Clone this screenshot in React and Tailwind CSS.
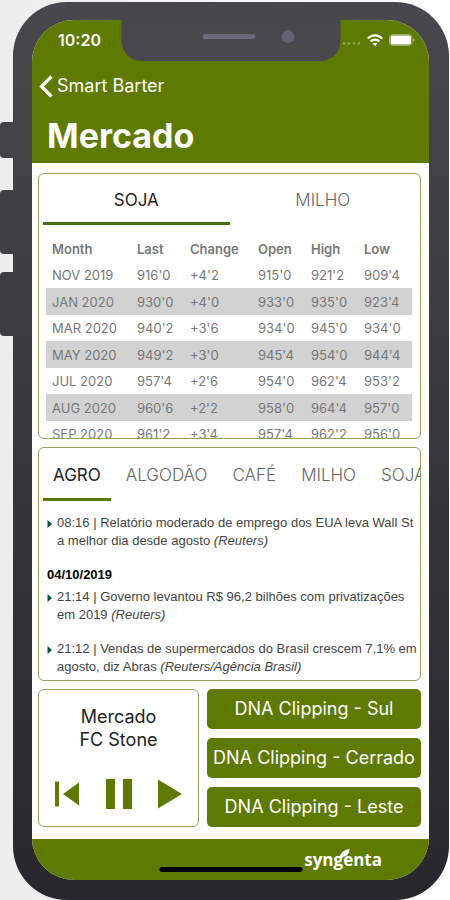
import React, { useState } from 'react';

const QUOTES = [
  ['NOV 2019', "916'0", "+4'2", "915'0", "921'2", "909'4"],
  ['JAN 2020', "930'0", "+4'0", "933'0", "935'0", "923'4"],
  ['MAR 2020', "940'2", "+3'6", "934'0", "945'0", "934'0"],
  ['MAY 2020', "949'2", "+3'0", "945'4", "954'0", "944'4"],
  ['JUL 2020', "957'4", "+2'6", "954'0", "962'4", "953'2"],
  ['AUG 2020', "960'6", "+2'2", "958'0", "964'4", "957'0"],
  ['SEP 2020', "961'2", "+3'4", "957'4", "962'2", "956'0"],
];

const NEWS_TABS = ['AGRO', 'ALGODÃO', 'CAFÉ', 'MILHO', 'SOJA'];

export default function App() {
  return (
    <div className="relative min-h-screen bg-linear-to-r from-[#ededed] to-white pl-[13px] pt-[2px] pr-px font-['Inter','Liberation_Sans',sans-serif]">
      <SideButtons />
      <div className="rounded-[54px] bg-linear-to-b from-[#48474c] to-[#28272c] pt-[18px] pr-5 pb-5 pl-[19px]">
        <div className="relative flex flex-col overflow-hidden rounded-[42px] bg-white">
          <Notch />
          <Header />
          <main className="flex flex-col gap-2 pt-2.5 pr-2 pb-3 pl-1.5">
            <QuotesCard />
            <NewsCard />
            <div className="flex gap-2">
              <Player />
              <Clippings />
            </div>
          </main>
          <Footer />
        </div>
      </div>
    </div>
  );
}

function SideButtons() {
  return (
    <div className="absolute left-0 top-[122px] flex w-4 flex-col">
      <div className="h-9 rounded-l-sm bg-[#434247]"></div>
      <div className="mt-8 h-16 rounded-l-sm bg-[#403f44]"></div>
      <div className="mt-[18px] h-16 rounded-l-sm bg-[#3d3c41]"></div>
    </div>
  );
}

function Notch() {
  return (
    <div className="absolute left-1/2 top-0 flex h-[41px] w-[219px] -translate-x-1/2 items-center justify-center rounded-b-[20px] bg-[#48474c] pb-2">
      <div className="ml-9 h-[5px] w-[53px] rounded-full bg-[#6a687a]"></div>
      <div className="ml-[26px] size-[13px] rounded-full bg-[#636174]"></div>
    </div>
  );
}

function Header() {
  return (
    <header className="bg-[#5f7a00] text-white">
      <div className="flex h-10 items-center justify-between pr-3.5 pl-[26px]">
        <span className="text-base font-semibold">10:20</span>
        <div className="flex items-center gap-1.5">
          <svg className="h-3 w-[19px]" viewBox="0 0 19 12" fill="#fff" opacity="0.35">
            <circle cx="2" cy="9.500" r="1.3" />
            <circle cx="7" cy="9.500" r="1.3" />
            <circle cx="12" cy="9.500" r="1.3" />
            <circle cx="17" cy="9.500" r="1.3" />
          </svg>
          <svg className="h-3 w-4" viewBox="0 0 16 12" fill="none" stroke="#fff" strokeWidth="2.2">
            <path d="M.8 4.600C5 .3 11 .3 15.200 4.600" />
            <path d="M3.600 7.500c2.500-2.600 6.300-2.600 8.800 0" />
            <path d="M8 12 5.600 9.600c1.300-1.300 3.500-1.300 4.800 0z" fill="#fff" stroke="none" />
          </svg>
          <svg className="h-3 w-[26px]" viewBox="0 0 26 12">
            <rect x="0.5" y="0.5" width="22.5" height="11" rx="3.2" fill="none" stroke="#fff" strokeOpacity="0.4" />
            <rect x="1.500" y="1.500" width="20.500" height="9" rx="2" fill="#fff" />
            <path d="M24 4v4c1.200-.5 1.600-1.200 1.600-2S25.200 4.500 24 4z" fill="#fff" fillOpacity="0.4" />
          </svg>
        </div>
      </div>
      <button className="mt-3 flex h-7 items-center gap-1 pl-[7px] text-lg">
        <svg className="h-[23px] w-[14px]" viewBox="0 0 14 23" fill="none" stroke="#fff" strokeWidth="3.2">
          <path d="M12.500 1.500 2.500 11.500l10 10" />
        </svg>
        Smart Barter
      </button>
      <h1 className="mt-4 h-[47px] pl-[15px] text-[34px] leading-10 font-bold">Mercado</h1>
    </header>
  );
}

function QuotesCard() {
  const [tab, setTab] = useState('SOJA');

  return (
    <section className="h-[266px] overflow-hidden rounded-md border border-[#93a35c] px-1">
      <div className="flex">
        {['SOJA', 'MILHO'].map((name) => (
          <button
            key={name}
            onClick={() => setTab(name)}
            className={`h-[51px] flex-1 border-b-3 pt-[5px] text-[17px] ${
              tab === name ? 'border-[#477010] text-[#222]' : 'border-transparent font-light text-[#666]'
            }`}
          >
            {name}
          </button>
        ))}
      </div>
      <div className="pt-2.5 pr-1 pl-[3px]">
        <table className="w-full table-fixed text-left text-[13px] leading-4 text-[#777]">
          <colgroup>
            <col className="w-[85px]" />
            <col className="w-[53px]" />
            <col className="w-[68px]" />
            <col className="w-[53px]" />
            <col className="w-[53px]" />
            <col className="w-[54px]" />
          </colgroup>
          <thead>
            <tr className="h-[27px]">
              {['Month', 'Last', 'Change', 'Open', 'High', 'Low'].map((label) => (
                <th key={label} className="pl-1.5 font-semibold">{label}</th>
              ))}
            </tr>
          </thead>
          <tbody>
            {QUOTES.map((row) => (
              <tr key={row[0]} className="h-[26px] even:h-[27px] even:bg-[#d2d2d2]">
                {row.map((value, i) => (
                  <td key={i} className="pl-1.5 whitespace-nowrap">{value}</td>
                ))}
              </tr>
            ))}
          </tbody>
        </table>
      </div>
    </section>
  );
}

function NewsCard() {
  const [tab, setTab] = useState('AGRO');

  return (
    <section className="h-[234px] overflow-hidden rounded-md border border-[#93a35c]">
      <div className="flex gap-[5px] pl-1">
        {NEWS_TABS.map((name) => (
          <button
            key={name}
            onClick={() => setTab(name)}
            className={`h-[53px] shrink-0 border-b-3 px-2.5 pt-[5px] text-[17px] ${
              tab === name ? 'border-[#5f7a00] text-[#222]' : 'border-transparent font-light text-[#666]'
            }`}
          >
            {name}
          </button>
        ))}
      </div>
      <div className="pt-[13px] pl-2 font-['Liberation_Sans',Arial,sans-serif] text-[13px] leading-[18px] text-[#444]">
        <NewsItem
          text="08:16 | Relatório moderado de emprego dos EUA leva Wall St a melhor dia desde agosto"
          source="Reuters"
        />
        <h2 className="mt-4 mb-1 font-bold text-black">04/10/2019</h2>
        <NewsItem
          text="21:14 | Governo levantou R$ 96,2 bilhões com privatizações em 2019"
          source="Reuters"
        />
        <div className="h-4"></div>
        <NewsItem
          text="21:12 | Vendas de supermercados do Brasil crescem 7,1% em agosto, diz Abras"
          source="Reuters/Agência Brasil"
        />
      </div>
    </section>
  );
}

function NewsItem({ text, source }) {
  return (
    <article className="flex gap-[5px]">
      <svg className="mt-1.5 h-2 w-[5px] shrink-0" viewBox="0 0 5 8" fill="#00543c">
        <path d="M0.500 0 5 4 0.500 8z" />
      </svg>
      <p>
        {text} <em>{`(${source})`}</em>
      </p>
    </article>
  );
}

function Player() {
  return (
    <section className="flex w-[161px] flex-col items-center rounded-md border border-[#93a35c] pt-[15px]">
      <h2 className="text-center text-lg leading-[23px] text-[#222]">
        Mercado
        <br />
        FC Stone
      </h2>
      <div className="mt-7 flex w-full items-center justify-between px-4">
        <button aria-label="Anterior">
          <svg className="h-[30px] w-6" viewBox="0 0 24 30" fill="#5f7a00">
            <path d="M0 2.500h4v25H0zM24 3.500v23L8 15z" />
          </svg>
        </button>
        <button aria-label="Pausar">
          <svg className="h-[30px] w-[26px]" viewBox="0 0 26 30" fill="#5f7a00">
            <path d="M0 0h9v30H0zM17 0h9v30h-9z" />
          </svg>
        </button>
        <button aria-label="Tocar">
          <svg className="h-[30px] w-6" viewBox="0 0 24 30" fill="#5f7a00">
            <path d="M0 0.500 24 15 0 29.500z" />
          </svg>
        </button>
      </div>
    </section>
  );
}

function Clippings() {
  return (
    <div className="flex flex-1 flex-col gap-[9px]">
      {['Sul', 'Cerrado', 'Leste'].map((region) => (
        <button key={region} className="flex h-10 items-center justify-center rounded-[5px] bg-[#5f7a00] text-lg whitespace-nowrap text-white">
          {`DNA Clipping - ${region}`}
        </button>
      ))}
    </div>
  );
}

function Footer() {
  return (
    <footer className="relative flex h-[41px] items-center justify-end bg-[#5f7a00] pr-[47px]">
      <div className="absolute bottom-2 left-1/2 h-[5px] w-[143px] -translate-x-1/2 rounded-full bg-black"></div>
      <div className="relative font-['Open_Sans','Noto_Sans',sans-serif] text-[17px] leading-6 font-bold text-white">
        syngenta
        <svg className="absolute top-px left-9 h-[10px] w-[10px]" viewBox="0 0 10 10" fill="#fff">
          <path d="M9.500 0C9.500 4.500 7 7.500 2.500 8L1.500 10 0 9.500C-.5 4.500 3 1 9.500 0z" />
        </svg>
      </div>
    </footer>
  );
}
